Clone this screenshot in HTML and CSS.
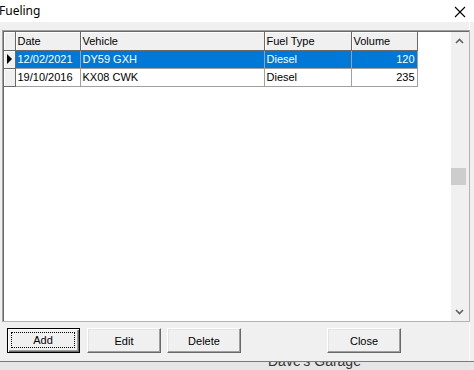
FILE: index.html
```html
<!DOCTYPE html>
<html lang="en">
<head>
  <meta charset="UTF-8" />
  <title>Fueling</title>
  <link rel="stylesheet" href="styles.css">
</head>
<body>
  <div class="window">
    <div class="titlebar">
      <span class="title">Fueling</span>
      <svg class="close-x" width="12" height="12" viewBox="0 0 12 12">
        <path d="M1 1 L11 11 M11 1 L1 11" stroke="#000" stroke-width="1.1" fill="none" />
      </svg>
    </div>

    <div class="grid">
      <div class="cells">
        <table class="data">
          <colgroup>
            <col class="c-ind">
            <col class="c-date">
            <col class="c-veh">
            <col class="c-fuel">
            <col class="c-vol">
          </colgroup>
          <thead>
            <tr>
              <th class="ind"></th>
              <th>Date</th>
              <th>Vehicle</th>
              <th>Fuel Type</th>
              <th>Volume</th>
            </tr>
          </thead>
          <tbody>
            <tr class="selected">
              <td class="ind"><span class="arrow"></span></td>
              <td>12/02/2021</td>
              <td>DY59 GXH</td>
              <td>Diesel</td>
              <td class="num">120</td>
            </tr>
            <tr>
              <td class="ind"></td>
              <td>19/10/2016</td>
              <td>KX08 CWK</td>
              <td>Diesel</td>
              <td class="num">235</td>
            </tr>
          </tbody>
        </table>
      </div>
      <div class="vscroll">
        <svg class="chev" width="9" height="6" viewBox="0 0 9 6">
          <path d="M1 5 L4.5 1.5 L8 5" stroke="#606060" stroke-width="1.6" fill="none" />
        </svg>
        <div class="track">
          <div class="thumb"></div>
        </div>
        <svg class="chev" width="9" height="6" viewBox="0 0 9 6">
          <path d="M1 1 L4.5 4.5 L8 1" stroke="#606060" stroke-width="1.6" fill="none" />
        </svg>
      </div>
    </div>

    <div class="buttons">
      <button class="btn default"><span class="focus">Add</span></button>
      <button class="btn edit">Edit</button>
      <button class="btn delete">Delete</button>
      <button class="btn close">Close</button>
    </div>
  </div>

  <div class="behind">
    <span class="behind-text">Dave's Garage</span>
  </div>
</body>
</html>
```

FILE: styles.css
```css
* {
  box-sizing: border-box;
}
body {
  margin: 0;
  width: 474px;
  height: 370px;
  overflow: hidden;
  background: #f0f0f0;
  font-family: 'Liberation Sans', Arial, sans-serif;
  font-size: 11px;
  color: #000;
}
.window {
  height: 361px;
  background: #f0f0f0;
  border-right: 1px solid #fcfcfc;
  width: 470px;
  display: flex;
  flex-direction: column;
}
.titlebar {
  height: 22px;
  width: 474px;
  background: #fff;
  display: flex;
  align-items: center;
  justify-content: space-between;
  padding-right: 8px;
}
.title {
  font-family: 'Noto Sans', sans-serif;
  font-size: 12px;
  margin-left: -1px;
  margin-top: -1px;
}
.close-x {
  margin-top: 2px;
}

/* data grid */
.grid {
  margin: 8px 0 0 2px;
  width: 468px;
  height: 292px;
  border-top: 1px solid #a0a0a0;
  border-left: 1px solid #a0a0a0;
  border-right: 1px solid #b4b4b4;
  border-bottom: 1px solid #b4b4b4;
  box-shadow: inset 1px 1px 0 #696969;
  display: flex;
  padding: 1px 0 0 1px;
}
.cells {
  flex: 1;
  background: #fff;
}
.data {
  border-collapse: collapse;
  table-layout: fixed;
  width: 413px;
}
.c-ind { width: 11px; }
.c-date { width: 65px; }
.c-veh { width: 184px; }
.c-fuel { width: 87px; }
.c-vol { width: 66px; }
.data th {
  height: 18px;
  padding: 0 0 0 2px;
  font-weight: normal;
  text-align: left;
  background: #f0f0f0;
  border-right: 1px solid #696969;
  border-bottom: 1px solid #696969;
  box-shadow: inset 1px 1px 0 #fff;
  white-space: nowrap;
  overflow: hidden;
}
.data td {
  height: 18px;
  padding: 0 0 0 2px;
  border-right: 1px solid #a0a0a0;
  border-bottom: 1px solid #a0a0a0;
  white-space: nowrap;
  overflow: hidden;
}
.data td.ind {
  background: #f0f0f0;
  border-right: 1px solid #696969;
  border-bottom: 1px solid #696969;
  box-shadow: inset 1px 1px 0 #fff;
  padding: 0;
}
.data td.num {
  text-align: right;
  padding: 0 2px 0 0;
}
.selected td {
  background: #0078d7;
  color: #fff;
}
.arrow {
  display: block;
  margin-left: 3px;
  width: 0;
  height: 0;
  border-top: 5px solid transparent;
  border-bottom: 5px solid transparent;
  border-left: 5px solid #000;
}

/* scrollbar */
.vscroll {
  width: 17px;
  margin-right: 1px;
  background: #f0f0f0;
  display: flex;
  flex-direction: column;
  align-items: center;
}
.chev {
  flex: none;
  margin: 6px 0;
}
.track {
  flex: 1;
  width: 100%;
  padding-top: 118px;
}
.thumb {
  width: 15px;
  height: 17px;
  background: #cdcdcd;
}

/* buttons */
.buttons {
  display: flex;
  margin: 6px 0 0 7px;
}
.btn {
  height: 25px;
  width: 74px;
  padding: 0;
  font-family: 'Liberation Sans', Arial, sans-serif;
  font-size: 11px;
  color: #000;
  background: #f0f0f0;
  border-style: solid;
  border-width: 1px;
  border-color: #fff #696969 #696969 #fff;
  box-shadow: inset -1px -1px 0 #a0a0a0, inset 1px 1px 0 #e3e3e3;
}
.btn.default {
  width: 73px;
  border: 1px solid #000;
  box-shadow: inset 1px 1px 0 #fff, inset -1px -1px 0 #696969, inset -2px -2px 0 #a0a0a0;
  padding: 3px 4px 4px 3px;
}
.focus {
  display: flex;
  align-items: center;
  justify-content: center;
  height: 100%;
  border: 1px dotted #000;
}
.edit { margin-left: 7px; }
.delete { margin-left: 6px; }
.close { margin-left: 86px; }

/* window behind */
.behind {
  height: 9px;
  border-top: 1px solid #7a7a7a;
  background: #e6e6e6;
  overflow: hidden;
  position: relative;
}
.behind-text {
  display: block;
  margin: -9px 0 0 268px;
  font-size: 14px;
  color: #333;
}
```
